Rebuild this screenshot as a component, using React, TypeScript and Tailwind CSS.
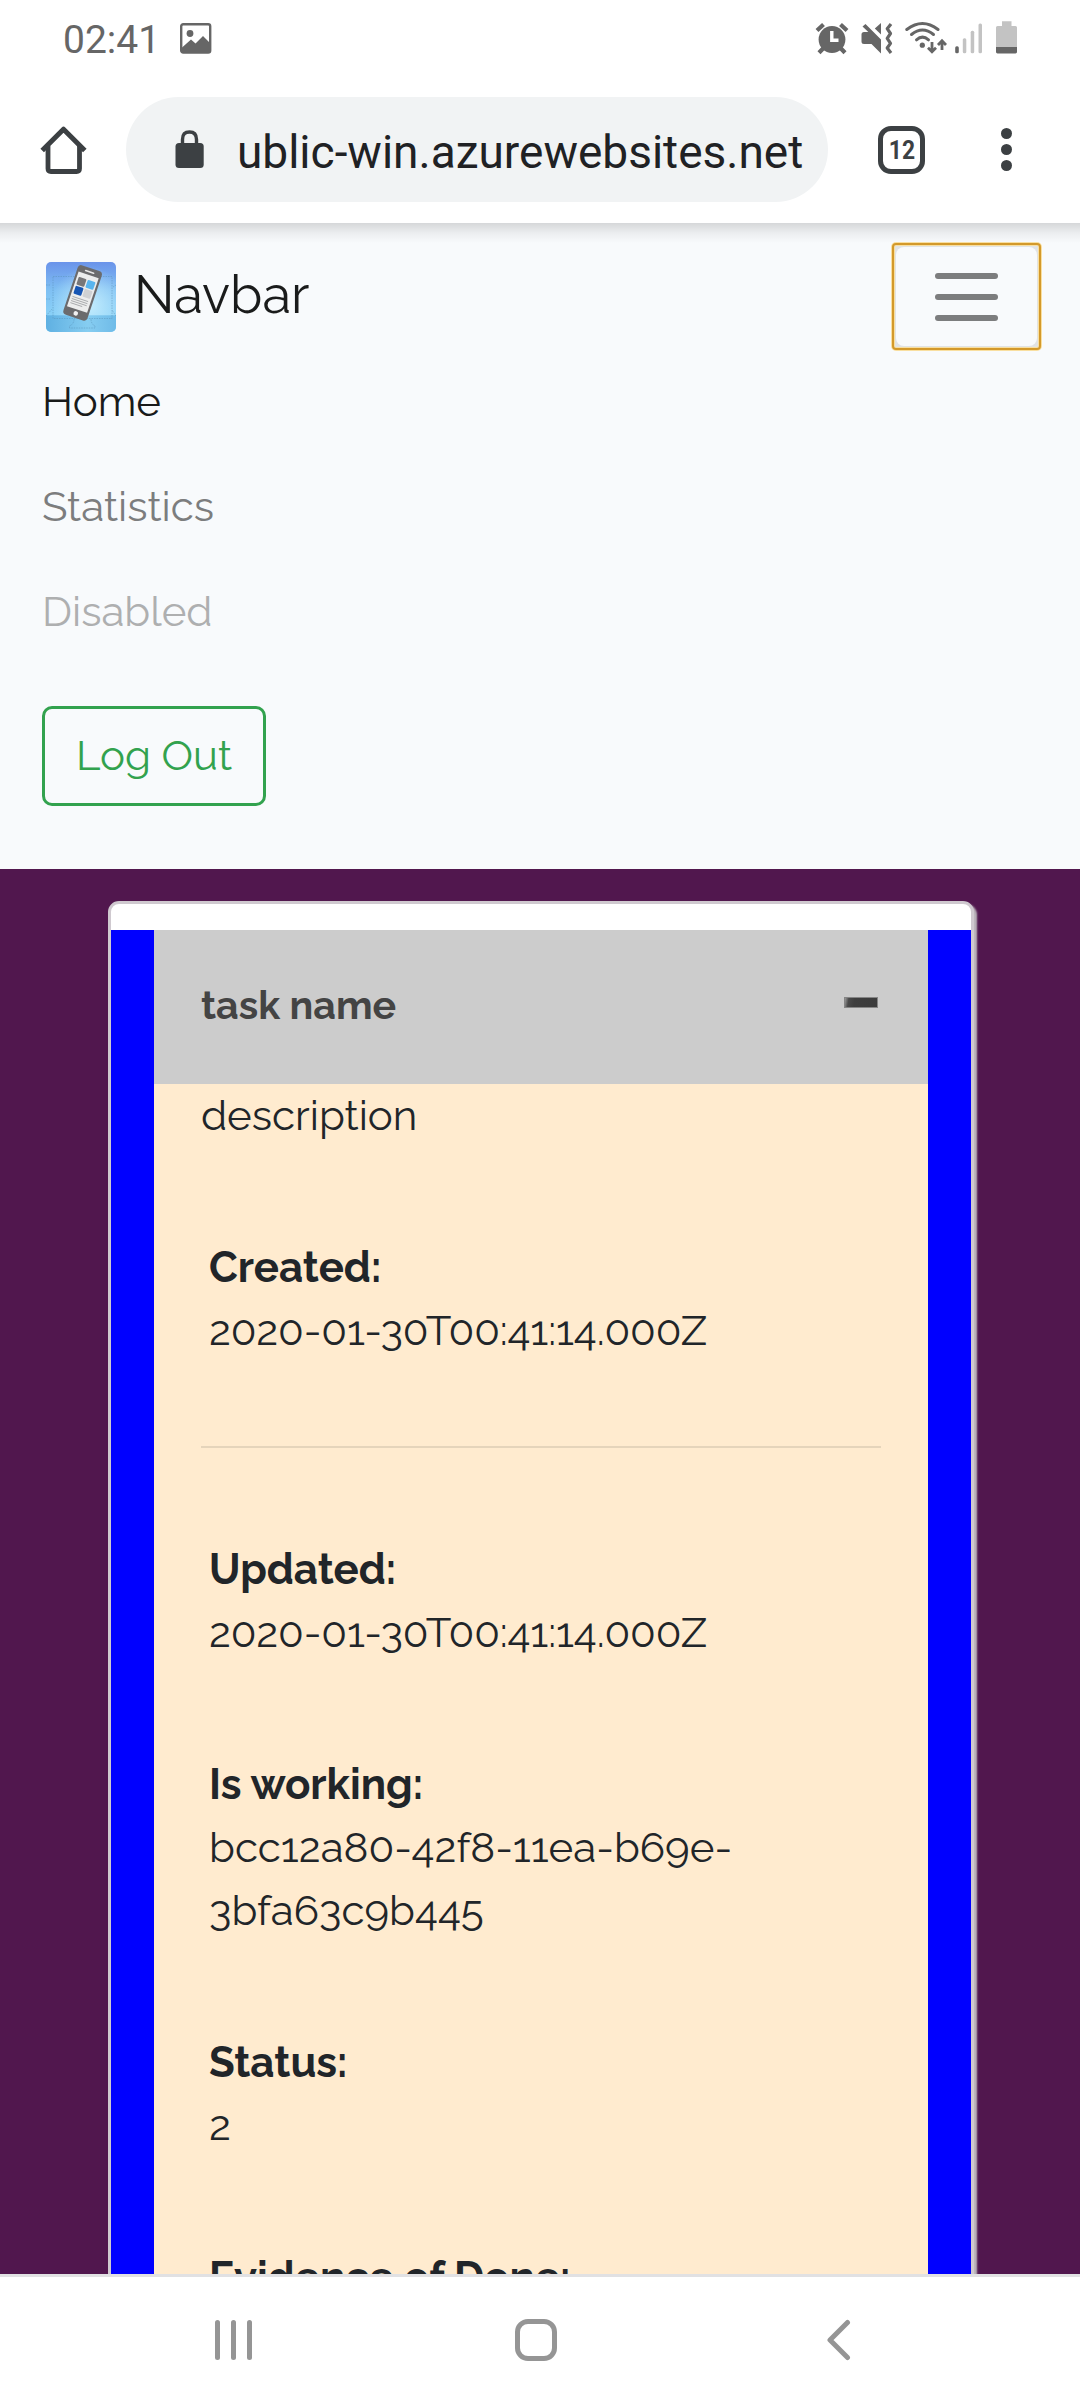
import type { ReactNode } from "react";

function PictureIcon() {
  return (
    <svg className="h-[31px] w-[32px]" viewBox="0 0 32 31">
      <rect x="1.2" y="1.2" width="29" height="28.3" rx="2" fill="none" stroke="#666" strokeWidth="2.4" />
      <circle cx="10" cy="10.5" r="3.4" fill="#666" />
      <path d="M1.5 25 L11 16.5 L15.5 20.5 L23 13 L30 20 V29.5 H1.5 Z" fill="#666" />
    </svg>
  );
}

function AlarmIcon() {
  return (
    <svg className="h-[34px] w-[34px]" viewBox="815 21 34 34">
      <g fill="none" stroke="#666" strokeWidth="4.2">
        <path d="M817 30.5 L823.5 24.5 M840.5 24.5 L847 30.5" />
        <path d="M824 47.5 L819 52.8 M840 47.5 L845 52.8" />
      </g>
      <circle cx="832" cy="39.5" r="13.4" fill="#666" />
      <path d="M831.8 31 V40.3 H838.5" fill="none" stroke="#fff" strokeWidth="3.4" />
    </svg>
  );
}

function MuteIcon() {
  return (
    <svg className="h-[34px] w-[34px]" viewBox="860 21 34 34">
      <path d="M862.5 26.5 L865.5 24 L881 39.5 V53.5 L871.5 44 H864 Q861.5 44 861.5 41.5 V34.5 Q861.5 32 864 32 H868.3 Z" fill="#666" />
      <path d="M881 23 V34.5 L874.8 28.5 Z" fill="#666" />
      <path d="M891 24 L887.2 28.7 L890.5 33.5 L887.2 38.3 L890.5 43.3 L887.2 48 L891 53" fill="none" stroke="#666" strokeWidth="3.2" strokeLinejoin="round" />
    </svg>
  );
}

function WifiIcon() {
  return (
    <svg className="h-[34px] w-[42px]" viewBox="905 21 42 34">
      <g fill="none" stroke="#666" strokeWidth="3" strokeLinecap="round">
        <path d="M906.8 29.5 Q922.5 17.5 938 29.5" />
        <path d="M911.5 34.5 Q922.5 25.5 933.5 34.5" />
        <path d="M916.5 39.8 Q922.5 34.5 928.5 39.8" />
      </g>
      <circle cx="922.3" cy="45.2" r="2.6" fill="#666" />
      <g fill="none" stroke="#666" strokeWidth="2.8">
        <path d="M932 42 V51.5 M928 47.8 L932 51.7 L936 47.8" />
        <path d="M942 50 V41 M938 45 L942 40.8 L946 45" />
      </g>
    </svg>
  );
}

function SignalIcon() {
  return (
    <svg className="h-[34px] w-[28px]" viewBox="955 21 28 34">
      <rect x="955.2" y="46.3" width="3.6" height="7" rx="1.5" fill="#666" />
      <rect x="962.8" y="38.3" width="3.5" height="15" rx="1.5" fill="#c3c3c3" />
      <rect x="970.7" y="30.7" width="3.5" height="22.6" rx="1.5" fill="#c3c3c3" />
      <rect x="978.5" y="23.5" width="3.5" height="29.8" rx="1.5" fill="#c3c3c3" />
    </svg>
  );
}

function BatteryIcon() {
  return (
    <svg className="h-[34px] w-[22px]" viewBox="996 21 22 34">
      <path d="M1002 21.3 H1011.5 V26 H1015.5 Q1017 26 1017 27.5 V47 H996 V27.5 Q996 26 997.5 26 H1002 Z" fill="#c3c3c3" />
      <path d="M996 47 H1017 V52 Q1017 53.4 1015.5 53.4 H997.5 Q996 53.4 996 52 Z" fill="#666" />
    </svg>
  );
}

function HomeIcon() {
  return (
    <svg className="h-[49px] w-[48px]" viewBox="0 0 48 49">
      <path d="M2.2 25.5 L23.5 4.2 L44.8 25.5" fill="none" stroke="#3c4043" strokeWidth="5" strokeLinejoin="round" />
      <path d="M8 21 V43.5 Q8 46.5 11 46.5 H36.5 Q39.5 46.5 39.5 43.5 V21" fill="none" stroke="#3c4043" strokeWidth="4.8" />
    </svg>
  );
}

function LockIcon() {
  return (
    <svg className="h-[39px] w-[30px]" viewBox="0 0 30 39">
      <path d="M7.5 14 V9.5 Q7.5 2 14.5 2 Q21.5 2 21.5 9.5 V14" fill="none" stroke="#3c4043" strokeWidth="3.4" />
      <rect x="0.5" y="13" width="28.2" height="25" rx="3.5" fill="#3c4043" />
    </svg>
  );
}

function BrandLogo() {
  return (
    <svg className="h-[70px] w-[70px] rounded-[5px]" viewBox="0 0 70 70">
      <defs>
        <linearGradient id="sky" x1="0" y1="0" x2="0" y2="1">
          <stop offset="0" stopColor="#6a93ea" />
          <stop offset="0.4" stopColor="#7fc0f3" />
          <stop offset="1" stopColor="#8fdcfa" />
        </linearGradient>
        <radialGradient id="glow" cx="0.62" cy="0.62" r="0.55">
          <stop offset="0" stopColor="#c3ecfd" />
          <stop offset="1" stopColor="#c3ecfd" stopOpacity="0" />
        </radialGradient>
        <linearGradient id="floor" x1="0" y1="0" x2="1" y2="0">
          <stop offset="0" stopColor="#5fb0e2" />
          <stop offset="0.6" stopColor="#86cdf1" />
          <stop offset="1" stopColor="#6fbbe8" />
        </linearGradient>
      </defs>
      <rect width="70" height="70" fill="url(#sky)" />
      <rect width="70" height="70" fill="url(#glow)" />
      <rect y="53.3" width="70" height="16.7" fill="url(#floor)" />
      <g fill="none" stroke="#5b92b8" strokeWidth="0.5" strokeDasharray="1.5 1">
        <rect x="7" y="14.5" width="59" height="42" />
        <path d="M28 57 Q28 62 23.5 64 V66 H49 V64 Q45 62 45 57" />
        <path d="M0 23 H4 M0 37 H4 M0 54 L6 47 M70 23 L67 25 M70 54 L66 48" />
      </g>
      <g transform="translate(36.6 30.9) rotate(18.5)">
        <rect x="-12.7" y="-26" width="25.4" height="52" rx="3.8" fill="#6b6b6d" />
        <rect x="-10.6" y="-19" width="21.2" height="36.5" fill="#eceded" />
        <rect x="-5" y="-23" width="10" height="1.6" rx="0.8" fill="#e5e5e5" />
        <rect x="-8.7" y="-14.2" width="8.2" height="8.2" rx="1" fill="#777779" />
        <rect x="0.8" y="-14.2" width="8.2" height="8.2" rx="1" fill="#59b5ef" />
        <rect x="-8.7" y="-4.8" width="8.2" height="8.2" rx="1" fill="#1656b4" />
        <rect x="0.8" y="-4.8" width="8.2" height="8.2" rx="1" fill="#cfd1d3" />
        <path d="M-8.5 6.5 H8 M-8.5 8.7 H8 M-8.5 10.9 H8 M-8.5 13.1 H4" stroke="#a9abad" strokeWidth="0.9" />
        <circle cy="21.6" r="2.3" fill="#f1f1f1" />
      </g>
    </svg>
  );
}

function Field({ label, children }: { label: string; children: ReactNode }) {
  return (
    <div className="mt-[89px] pl-2">
      <div className="font-bold">{label}</div>
      <div>{children}</div>
    </div>
  );
}

function StatusBar() {
  return (
    <div className="flex h-[76px] items-center pr-[62px] pl-[63px]">
      <span className="mt-[5px] text-[39px] leading-none text-[#666]">02:41</span>
      <div className="ml-[20px]">
        <PictureIcon />
      </div>
      <div className="ml-auto flex items-center">
        <AlarmIcon />
        <div className="ml-[11px]"><MuteIcon /></div>
        <div className="ml-[11px]"><WifiIcon /></div>
        <div className="ml-[8px]"><SignalIcon /></div>
        <div className="ml-[13px]"><BatteryIcon /></div>
      </div>
    </div>
  );
}

function Toolbar() {
  return (
    <div className="mt-[21px] flex h-[105px] items-center pl-10">
      <HomeIcon />
      <div className="ml-[38px] flex h-full w-[702px] items-center rounded-full bg-[#f1f3f4] pl-[49px]">
        <LockIcon />
        <span className="mt-[4px] ml-[32px] text-[46px] leading-none whitespace-nowrap text-[#202124]">ublic-win.azurewebsites.net</span>
      </div>
      <div className="ml-[50px] flex h-[48px] w-[47px] items-center justify-center rounded-[13px] border-[5px] border-[#3c4043]">
        <span className="block scale-x-[0.88] text-[26px] leading-none font-bold text-[#3c4043]">12</span>
      </div>
      <div className="ml-[76px] flex flex-col gap-[5px]">
        <i className="size-[11px] rounded-full bg-[#3c4043]" />
        <i className="size-[11px] rounded-full bg-[#3c4043]" />
        <i className="size-[11px] rounded-full bg-[#3c4043]" />
      </div>
    </div>
  );
}

function Navbar() {
  return (
    <nav className="h-[646px] bg-[#f8fafc] px-[42px] pt-[20px]">
      <div className="-mr-[3px] flex h-[107px] items-start justify-between">
        <div className="flex items-start pt-[19px] pl-1">
          <BrandLogo />
          <span className="-mt-[2px] ml-[18px] text-[52.5px] leading-[70px] text-[#1a1b1b]">Navbar</span>
        </div>
        <button className="flex h-[107px] w-[149px] items-center justify-center rounded-[4px] border-2 border-[#d3992b] bg-[#e1e3e4] shadow-[0_0_0_1px_#f9dfa0,inset_0_0_0_1px_#f9dfa0]">
          <span className="flex h-[99px] w-[141px] flex-col items-center justify-center gap-[15px] rounded-[8px] bg-[#f8fafc]">
            <i className="h-[6px] w-[63px] rounded-full bg-[#7c7d7e]" />
            <i className="h-[6px] w-[63px] rounded-full bg-[#7c7d7e]" />
            <i className="h-[6px] w-[63px] rounded-full bg-[#7c7d7e]" />
          </span>
        </button>
      </div>
      <ul className="-mt-px leading-[63px]">
        <li className="py-[21px] text-[#191a1a]">Home</li>
        <li className="py-[21px] text-[#7c7d7e]">Statistics</li>
        <li className="py-[21px] text-[#aeafb0]">Disabled</li>
      </ul>
      <button className="mt-[42px] flex h-[100px] w-[224px] items-center justify-center rounded-[10px] border-[3px] border-[#32a24e] pb-px text-[#32a24e]">
        Log Out
      </button>
    </nav>
  );
}

function TaskCard() {
  return (
    <div className="mt-8 ml-[108px] w-[866px] rounded-t-[11px] border-[3px] border-[#cfc9cf] bg-white pt-[26px] shadow-[3px_3px_2px_#bcb6bc]">
      <div className="h-[1500px] bg-[#0000ff] px-[43px]">
        <div className="flex h-[154px] items-center justify-between bg-[#cccccc] pr-[50px] pl-[47px]">
          <span className="pb-1 text-[39.375px] leading-[59px] font-bold text-[#444]">task name</span>
          <i className="mb-[9px] h-[11px] w-[34px] border border-[#858585] bg-[linear-gradient(100deg,#9a9a9a,#4a4a4a_12%,#3e3e3e_30%,#3b3b3b)]" />
        </div>
        <div className="h-[1346px] bg-[#ffebcf] px-[47px] leading-[63px] text-[#212529]">
          <p>description</p>
          <Field label="Created:"><span className="tracking-[-0.12px]">2020-01-30T00:41:14.000Z</span></Field>
          <hr className="mt-[84px] mb-[90px] h-[2px] border-0 bg-[#e5d4bb]" />
          <Field label="Updated:"><span className="tracking-[-0.12px]">2020-01-30T00:41:14.000Z</span></Field>
          <Field label="Is working:">
            bcc12a80-42f8-11ea-b69e-
            <br />
            3bfa63c9b445
          </Field>
          <Field label="Status:">2</Field>
          <Field label="Evidence of Done:">{null}</Field>
        </div>
      </div>
    </div>
  );
}

function SystemNav() {
  return (
    <div className="flex h-[126px] items-center border-t-[3px] border-[#e1e1e3] bg-white pt-[3px] pl-[215px]">
      <div className="flex gap-[10.5px]">
        <i className="h-[40px] w-[5.3px] rounded-full bg-[#959595]" />
        <i className="h-[40px] w-[5.3px] rounded-full bg-[#959595]" />
        <i className="h-[40px] w-[5.3px] rounded-full bg-[#959595]" />
      </div>
      <div className="ml-[263px] size-[42px] rounded-[13px] border-[5px] border-[#959595]" />
      <svg className="ml-[268px] h-[42px] w-[28px]" viewBox="0 0 28 42">
        <path d="M22.5 3.5 L5 21 L22.5 38.5" fill="none" stroke="#959595" strokeWidth="5" strokeLinecap="round" strokeLinejoin="round" />
      </svg>
    </div>
  );
}

export default function App() {
  return (
    <div className="flex h-[2400px] w-[1080px] flex-col overflow-hidden bg-white font-['Roboto',sans-serif]">
      <header className="h-[223px] shrink-0 bg-white">
        <StatusBar />
        <Toolbar />
      </header>
      <main className="relative h-[2051px] shrink-0 overflow-hidden bg-[#51174e] font-['Raleway','Lato',sans-serif] text-[42px]">
        <div className="pointer-events-none absolute inset-x-0 top-0 h-5 bg-linear-to-b from-black/14 via-black/5 to-transparent" />
        <Navbar />
        <TaskCard />
      </main>
      <SystemNav />
    </div>
  );
}
